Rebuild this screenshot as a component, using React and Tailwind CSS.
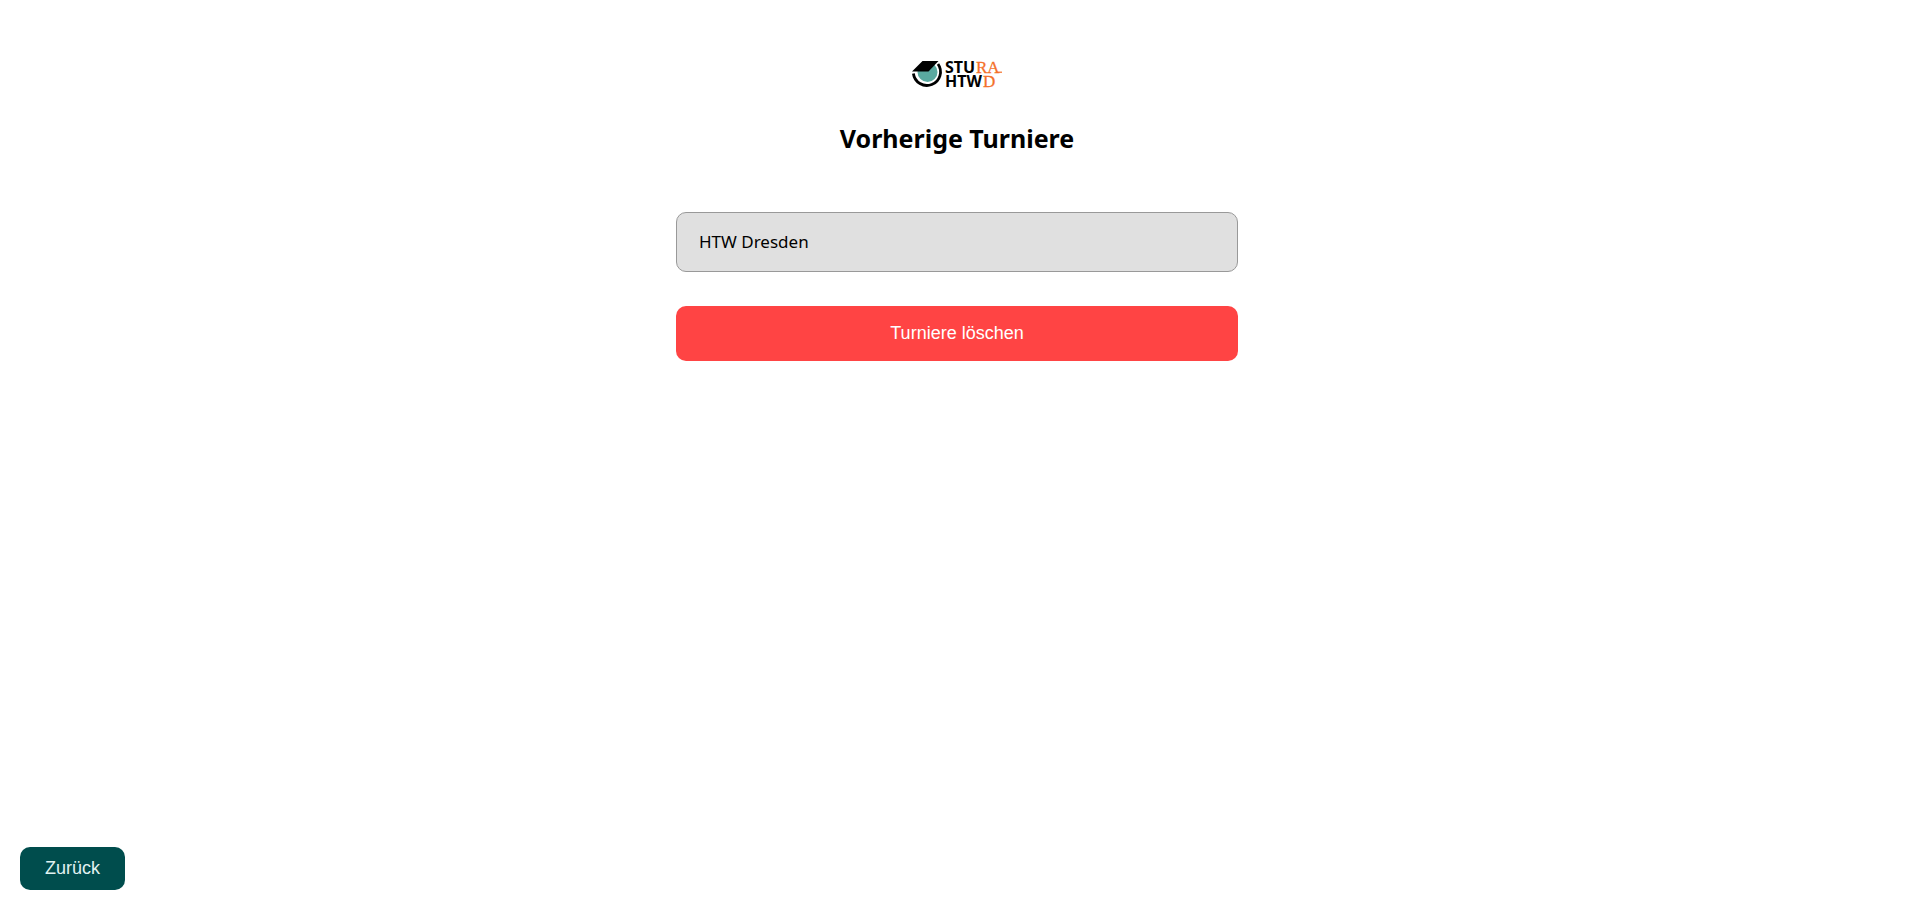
function Logo() {
  return (
    <svg viewBox="0 0 90 28" className="h-7 w-[90px] overflow-visible" role="img" aria-label="StuRa HTWD">
      <circle cx="15.5" cy="12" r="10" fill="#5aa9a0" />
      <path d="M1.4 13.5A13.6 13.6 0 1 0 26 4" fill="none" stroke="#000" strokeWidth="2.8" />
      <path d="M10.5 1h16L16.5 11.5H0z" fill="#000" />
      <g fontFamily="'Noto Sans', sans-serif" fontWeight="700" fontSize="16" fill="#000">
        <text x="33" y="12.5">STU</text>
        <text x="33" y="27">HTW</text>
      </g>
      <g fontFamily="'Liberation Serif', serif" fontSize="17" fill="#f4702a" stroke="#f4702a" strokeWidth="0.3">
        <text x="64" y="12.5">RA</text>
        <text x="71" y="27">D</text>
      </g>
      <path d="M85 12.2h5" stroke="#f4702a" strokeWidth="1.2" />
    </svg>
  );
}

export default function App() {
  return (
    <div className="flex min-h-screen flex-col bg-white text-black">
      <main className="grow pt-15 pl-[7px]">
        <div className="mx-auto flex w-full max-w-[562px] flex-col items-center">
          <Logo />
          <h1 className="mt-[30px] font-['Noto_Sans',sans-serif] text-[25px] leading-10 font-bold">
            Vorherige Turniere
          </h1>
          <ul className="mt-[54px] w-full">
            <li>
              <a
                href="#htw-dresden"
                className="flex h-15 items-center rounded-[10px] border border-[#999999] bg-[#e0e0e0] px-[22px] font-['Noto_Sans',sans-serif] text-[17px]"
              >
                HTW Dresden
              </a>
            </li>
          </ul>
          <button
            type="button"
            className="mt-[34px] h-[55px] w-full rounded-[10px] bg-[#ff4444] pb-0.5 font-['Liberation_Sans',sans-serif] text-lg text-white"
          >
            Turniere löschen
          </button>
        </div>
      </main>
      <footer className="px-5 pb-[9px]">
        <button
          type="button"
          className="block h-[43px] rounded-[10px] bg-[#004d4d] px-[25px] pb-0.5 font-['Liberation_Sans',sans-serif] text-lg text-[#e0f2f1]"
        >
          Zurück
        </button>
      </footer>
    </div>
  );
}
